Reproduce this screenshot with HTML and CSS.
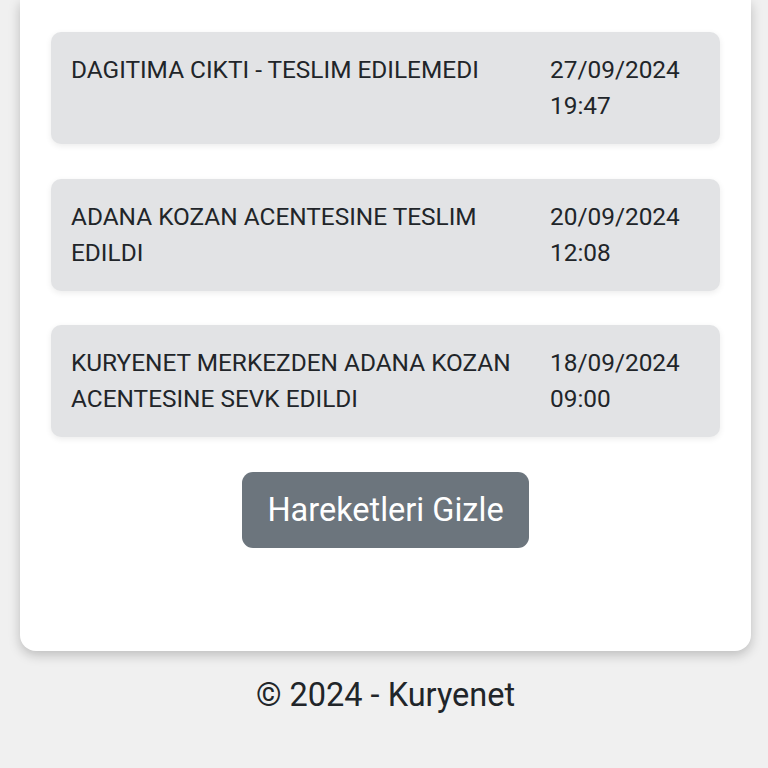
FILE: index.html
```html
<!DOCTYPE html>
<html lang="tr">
<head>
<meta charset="utf-8">
<title>Kuryenet - Kargo Takip</title>
<link rel="stylesheet" href="styles.css">
</head>
<body>
<div class="page">
  <main class="card">
    <ul class="moves">
      <li class="move">
        <div class="move-desc">DAGITIMA CIKTI - TESLIM EDILEMEDI</div>
        <div class="move-date">27/09/2024 19:47</div>
      </li>
      <li class="move">
        <div class="move-desc">ADANA KOZAN ACENTESINE TESLIM EDILDI</div>
        <div class="move-date">20/09/2024 12:08</div>
      </li>
      <li class="move">
        <div class="move-desc">KURYENET MERKEZDEN ADANA KOZAN ACENTESINE SEVK EDILDI</div>
        <div class="move-date">18/09/2024 09:00</div>
      </li>
    </ul>
    <div class="actions">
      <button class="btn-secondary" type="button">Hareketleri Gizle</button>
    </div>
  </main>
  <footer class="footer">© 2024 - Kuryenet</footer>
</div>
</body>
</html>
```

FILE: styles.css
```css
html, body {
  margin: 0;
  padding: 0;
}
body {
  background: #f0f0f0;
  font-family: Roboto, "Noto Sans", "Liberation Sans", sans-serif;
  color: #212529;
}
.page {
  padding: 0 17px 40px 20px;
}
.card {
  background: #ffffff;
  border-radius: 0 0 16px 16px;
  box-shadow: 0 4px 12px rgba(0, 0, 0, 0.22);
  padding: 32px 31px 103px;
}
.moves {
  list-style: none;
  margin: 0;
  padding: 0;
  display: flex;
  flex-direction: column;
  gap: 34.5px;
}
.move {
  background: #e2e3e5;
  border-radius: 10px;
  box-shadow: 0 2px 6px rgba(0, 0, 0, 0.08);
  padding: 20px 20px;
  display: grid;
  grid-template-columns: 1fr 150px;
  column-gap: 20px;
  font-size: 24.4px;
  line-height: 36px;
}
.actions {
  margin-top: 35px;
  display: flex;
  justify-content: center;
}
.btn-secondary {
  background: #6c757d;
  color: #ffffff;
  border: none;
  border-radius: 11px;
  font-family: inherit;
  font-size: 32.5px;
  line-height: 48px;
  padding: 14px 25px;
}
.footer {
  margin-top: 20px;
  text-align: center;
  font-size: 32.5px;
  line-height: 48px;
  color: #212529;
}
```
